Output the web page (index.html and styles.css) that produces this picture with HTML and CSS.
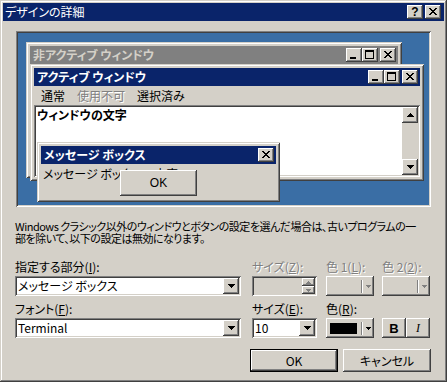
FILE: index.html
```html
<!DOCTYPE html>
<html lang="ja">
<head>
    <meta charset="UTF-8">
    <title>デザインの詳細</title>
    <link rel="stylesheet" href="styles.css">
</head>
<body>
<div class="dialog">
    <div class="titlebar">
        <span class="title-text">デザインの詳細</span>
        <span class="cap-btn help">?</span>
        <span class="cap-btn"><svg width="16" height="14" viewBox="0 0 16 14"><path d="M4 3h2v1h-2zM10 3h2v1h-2zM5 4h2v1h-2zM9 4h2v1h-2zM6 5h4v1h-4zM7 6h2v1h-2zM6 7h4v1h-4zM5 8h2v1h-2zM9 8h2v1h-2zM4 9h2v1h-2zM10 9h2v1h-2z"/></svg></span>
    </div>

    <div class="content">
        <!-- preview of the window parts -->
        <div class="preview">
            <div class="win win-inactive">
                <div class="caption caption-inactive">
                    <span class="caption-text">非アクティブ ウィンドウ</span>
                    <span class="cap-btn"><svg width="16" height="14" viewBox="0 0 16 14"><path d="M4 9h6v2h-6z"/></svg></span>
                    <span class="cap-btn"><svg width="16" height="14" viewBox="0 0 16 14"><path fill-rule="evenodd" d="M3 2h9v9h-9zM4 4v6h7v-6z"/></svg></span>
                    <span class="cap-btn cap-close"><svg width="16" height="14" viewBox="0 0 16 14"><path d="M4 3h2v1h-2zM10 3h2v1h-2zM5 4h2v1h-2zM9 4h2v1h-2zM6 5h4v1h-4zM7 6h2v1h-2zM6 7h4v1h-4zM5 8h2v1h-2zM9 8h2v1h-2zM4 9h2v1h-2zM10 9h2v1h-2z"/></svg></span>
                </div>
            </div>

            <div class="win win-active">
                <div class="caption">
                    <span class="caption-text">アクティブ ウィンドウ</span>
                    <span class="cap-btn"><svg width="16" height="14" viewBox="0 0 16 14"><path d="M4 9h6v2h-6z"/></svg></span>
                    <span class="cap-btn"><svg width="16" height="14" viewBox="0 0 16 14"><path fill-rule="evenodd" d="M3 2h9v9h-9zM4 4v6h7v-6z"/></svg></span>
                    <span class="cap-btn cap-close"><svg width="16" height="14" viewBox="0 0 16 14"><path d="M4 3h2v1h-2zM10 3h2v1h-2zM5 4h2v1h-2zM9 4h2v1h-2zM6 5h4v1h-4zM7 6h2v1h-2zM6 7h4v1h-4zM5 8h2v1h-2zM9 8h2v1h-2zM4 9h2v1h-2zM10 9h2v1h-2z"/></svg></span>
                </div>
                <div class="menubar">
                    <span class="menu-item">通常</span>
                    <span class="menu-item disabled">使用不可</span>
                    <span class="menu-item">選択済み</span>
                </div>
                <div class="textarea">
                    <div class="textarea-body">ウィンドウの文字</div>
                    <div class="scrollbar">
                        <span class="scroll-btn"><svg width="7" height="4" viewBox="0 0 7 4"><path d="M3 0h1v1h-1zM2 1h3v1h-3zM1 2h5v1h-5zM0 3h7v1h-7z"/></svg></span>
                        <span class="scroll-btn"><svg width="7" height="4" viewBox="0 0 7 4"><path d="M0 0h7v1h-7zM1 1h5v1h-5zM2 2h3v1h-3zM3 3h1v1h-1z"/></svg></span>
                    </div>
                </div>
            </div>

            <div class="win win-msg">
                <div class="caption">
                    <span class="caption-text">メッセージ ボックス</span>
                    <span class="cap-btn"><svg width="16" height="14" viewBox="0 0 16 14"><path d="M4 3h2v1h-2zM10 3h2v1h-2zM5 4h2v1h-2zM9 4h2v1h-2zM6 5h4v1h-4zM7 6h2v1h-2zM6 7h4v1h-4zM5 8h2v1h-2zM9 8h2v1h-2zM4 9h2v1h-2zM10 9h2v1h-2z"/></svg></span>
                </div>
                <div class="msg-text">メッセージ ボックスの文字</div>
                <span class="btn msg-ok">OK</span>
            </div>
        </div>

        <p class="note">Windows クラシック以外のウィンドウとボタンの設定を選んだ場合は、古いプログラムの一<br>部を除いて、以下の設定は無効になります。</p>

        <div class="fields">
            <label class="field-label">指定する部分(<u>I</u>):</label>
            <label class="field-label disabled">サイズ(<u>Z</u>):</label>
            <label class="field-label disabled">色 1(<u>L</u>):</label>
            <label class="field-label disabled">色 2(<u>2</u>):</label>

            <div class="combo combo-wide">
                <span class="combo-value">メッセージ ボックス</span>
                <span class="btn combo-btn"><svg width="7" height="4" viewBox="0 0 7 4"><path d="M0 0h7v1h-7zM1 1h5v1h-5zM2 2h3v1h-3zM3 3h1v1h-1z"/></svg></span>
            </div>
            <div class="spin">
                <span class="spin-value"></span>
                <span class="spin-btns">
                    <span class="btn spin-btn"><svg width="5" height="3" viewBox="0 0 5 3"><path d="M2 0h1v1h-1zM1 1h3v1h-3zM0 2h5v1h-5z"/></svg></span>
                    <span class="btn spin-btn"><svg width="5" height="3" viewBox="0 0 5 3"><path d="M0 0h5v1h-5zM1 1h3v1h-3zM2 2h1v1h-1z"/></svg></span>
                </span>
            </div>
            <div class="btn color-btn is-off">
                <span class="swatch"></span>
                <span class="color-sep"></span>
                <svg width="5" height="3" viewBox="0 0 5 3"><path d="M0 0h5v1h-5zM1 1h3v1h-3zM2 2h1v1h-1z"/></svg>
            </div>
            <div class="btn color-btn is-off">
                <span class="swatch"></span>
                <span class="color-sep"></span>
                <svg width="5" height="3" viewBox="0 0 5 3"><path d="M0 0h5v1h-5zM1 1h3v1h-3zM2 2h1v1h-1z"/></svg>
            </div>

            <label class="field-label">フォント(<u>F</u>):</label>
            <label class="field-label">サイズ(<u>E</u>):</label>
            <label class="field-label">色(<u>R</u>):</label>
            <span></span>

            <div class="combo combo-wide">
                <span class="combo-value">Terminal</span>
                <span class="btn combo-btn"><svg width="7" height="4" viewBox="0 0 7 4"><path d="M0 0h7v1h-7zM1 1h5v1h-5zM2 2h3v1h-3zM3 3h1v1h-1z"/></svg></span>
            </div>
            <div class="combo combo-size">
                <span class="combo-value">10</span>
                <span class="btn combo-btn"><svg width="7" height="4" viewBox="0 0 7 4"><path d="M0 0h7v1h-7zM1 1h5v1h-5zM2 2h3v1h-3zM3 3h1v1h-1z"/></svg></span>
            </div>
            <div class="btn color-btn">
                <span class="swatch swatch-black"></span>
                <span class="color-sep"></span>
                <svg width="5" height="3" viewBox="0 0 5 3"><path d="M0 0h5v1h-5zM1 1h3v1h-3zM2 2h1v1h-1z"/></svg>
            </div>
            <div class="style-btns">
                <span class="btn style-btn bold">B</span>
                <span class="btn style-btn italic">I</span>
            </div>
        </div>

        <div class="actions">
            <span class="btn action-btn default">OK</span>
            <span class="btn action-btn">キャンセル</span>
        </div>
    </div>
</div>
</body>
</html>
```

FILE: styles.css
```css
/* --- Windows classic "advanced appearance" dialog --- */
* {
    box-sizing: border-box;
}

body {
    margin: 0;
    background: #d4d0c8;
    font-family: "Noto Sans CJK JP", sans-serif;
    font-size: 12px;
    font-feature-settings: "palt";
    color: #000;
}

svg {
    display: block;
    fill: currentColor;
    shape-rendering: crispEdges;
}

.dialog {
    width: 447px;
    height: 382px;
    padding: 3px;
    display: flex;
    flex-direction: column;
    box-shadow: inset -1px -1px #404040, inset 1px 1px #d4d0c8, inset -2px -2px #808080, inset 2px 2px #fff;
}

/* raised 3D look shared by buttons */
.btn,
.cap-btn {
    background: #d4d0c8;
    box-shadow: inset -1px -1px #404040, inset 1px 1px #fff, inset -2px -2px #808080;
}

.titlebar {
    height: 18px;
    display: flex;
    align-items: center;
    gap: 2px;
    padding: 0 3px 0 2px;
    background: #0a246a;
    color: #fff;
    line-height: 18px;
}

.title-text {
    flex: 1;
}

.cap-btn {
    width: 16px;
    height: 14px;
    color: #000;
}

.help {
    font-family: "Liberation Sans", sans-serif;
    font-weight: bold;
    font-size: 12px;
    line-height: 14px;
    text-align: center;
}

.content {
    flex: 1;
    padding: 0 13px 0 12px;
}

/* --- preview area --- */
.preview {
    position: relative;
    width: 415px;
    height: 176px;
    margin: 10px 0 0 1px;
    background: #3a6ea5;
    box-shadow: inset 1px 1px #808080, inset -1px -1px #fff, inset 2px 2px #404040, inset -2px -2px #d4d0c8;
}

.win {
    position: absolute;
    padding: 4px;
    background: #d4d0c8;
    box-shadow: inset 1px 1px #d4d0c8, inset -1px -1px #404040, inset 2px 2px #fff, inset -2px -2px #808080;
}

.win-inactive {
    left: 10px;
    top: 11px;
    width: 376px;
    height: 136px;
}

.win-active {
    left: 14px;
    top: 33px;
    width: 394px;
    height: 117px;
}

.win-msg {
    left: 21px;
    top: 111px;
    width: 243px;
    height: 60px;
}

.caption {
    height: 18px;
    display: flex;
    align-items: center;
    padding: 0 2px 0 3px;
    background: #0a246a;
    color: #fff;
    font-weight: bold;
    line-height: 18px;
}

.caption-inactive {
    background: #808080;
    color: #d4d0c8;
}

.caption-text {
    flex: 1;
}

.cap-close {
    margin-left: 2px;
}

.menubar {
    height: 19px;
    display: flex;
    align-items: center;
    padding-left: 1px;
}

.menu-item {
    padding: 0 6px;
}

.disabled {
    color: #808080;
    text-shadow: 1px 1px 0 #fff;
}

.textarea {
    height: 72px;
    display: flex;
    padding: 2px;
    background: #fff;
    box-shadow: inset 1px 1px #808080, inset -1px -1px #fff, inset 2px 2px #404040, inset -2px -2px #d4d0c8;
}

.textarea-body {
    flex: 1;
    padding-left: 1px;
    font-weight: bold;
    line-height: 16px;
}

.scrollbar {
    width: 16px;
    display: flex;
    flex-direction: column;
    justify-content: space-between;
    background: #d4d0c8;
}

.scroll-btn {
    height: 16px;
    display: flex;
    align-items: center;
    justify-content: center;
    background: #d4d0c8;
    box-shadow: inset -1px -1px #404040, inset 1px 1px #fff, inset -2px -2px #808080;
}

.msg-text {
    padding: 3px 0 0 2px;
    line-height: 14px;
}

.msg-ok {
    position: absolute;
    left: 83px;
    top: 28px;
    width: 77px;
    height: 26px;
    display: flex;
    align-items: center;
    justify-content: center;
    font-family: "Liberation Sans", sans-serif;
}

/* --- settings --- */
.note {
    margin: 13px 0 0;
    font-size: 11px;
    letter-spacing: -0.5px;
    line-height: 12px;
    white-space: nowrap;
}

.fields {
    display: grid;
    grid-template-columns: 237px 74px 56px auto;
    grid-template-rows: 17px 20px 22px 20px;
    margin-top: 15px;
}

.field-label {
    align-self: end;
    margin-bottom: 2px;
    line-height: 14px;
}

.combo {
    height: 20px;
    display: flex;
    padding: 2px;
    background: #fff;
    box-shadow: inset 1px 1px #808080, inset -1px -1px #fff, inset 2px 2px #404040, inset -2px -2px #d4d0c8;
}

.combo-wide {
    width: 226px;
}

.combo-size {
    width: 65px;
}

.combo-value {
    flex: 1;
    padding-left: 1px;
    line-height: 16px;
}

.combo-btn {
    width: 16px;
    height: 16px;
    display: flex;
    align-items: center;
    justify-content: center;
}

.spin {
    width: 65px;
    height: 20px;
    display: flex;
    padding: 2px;
    box-shadow: inset 1px 1px #808080, inset -1px -1px #fff, inset 2px 2px #404040, inset -2px -2px #d4d0c8;
}

.spin-value {
    flex: 1;
}

.spin-btns {
    width: 13px;
    display: flex;
    flex-direction: column;
}

.spin-btn {
    flex: 1;
    display: flex;
    align-items: center;
    justify-content: center;
    color: #808080;
}

.color-btn {
    width: 48px;
    height: 20px;
    display: flex;
    align-items: center;
    padding: 0 3px 0 4px;
}

.color-btn.is-off {
    color: #808080;
}

.swatch {
    width: 28px;
    height: 11px;
}

.swatch-black {
    background: #000;
}

.color-sep {
    width: 2px;
    height: 13px;
    margin: 0 3px 0 4px;
    border-left: 1px solid #808080;
    border-right: 1px solid #fff;
}

.style-btns {
    display: flex;
}

.style-btn {
    width: 24px;
    height: 20px;
    display: flex;
    align-items: center;
    justify-content: center;
    font-family: "Liberation Sans", sans-serif;
}

.bold {
    font-weight: bold;
    font-size: 13px;
}

.italic {
    font-style: italic;
    font-family: "Liberation Serif", serif;
}

.actions {
    display: flex;
    justify-content: flex-end;
    gap: 5px;
    margin-top: 11px;
}

.action-btn {
    width: 88px;
    height: 23px;
    display: flex;
    align-items: center;
    justify-content: center;
}

.default {
    border: 1px solid #000;
}
```
